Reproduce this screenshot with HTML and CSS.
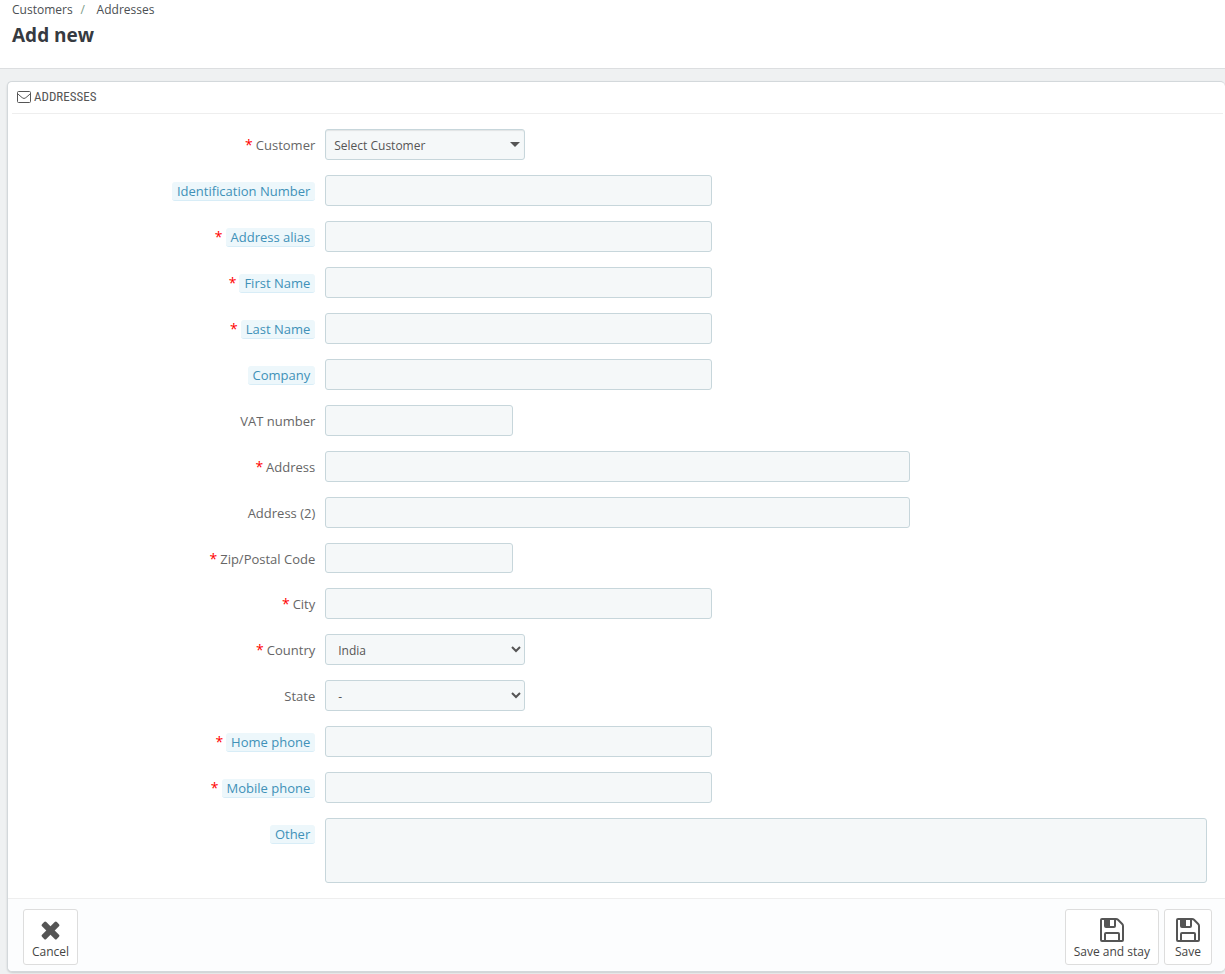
FILE: index.html
```html
<!DOCTYPE html>
<html lang="en">
<head>
<meta charset="utf-8">
<meta name="viewport" content="width=device-width, initial-scale=1">
<title>Add new - Addresses</title>
<link rel="stylesheet" href="styles.css">
</head>
<body>
<header class="page-head">
  <nav class="breadcrumb" aria-label="Breadcrumb">
    <a href="#customers">Customers</a><span class="separator">/</span><a href="#addresses">Addresses</a>
  </nav>
  <h1 class="page-title">Add new</h1>
</header>
<main class="content">
  <form class="panel">
    <h2 class="panel-heading">
      <svg class="icon-envelope" viewBox="0 0 14 12" aria-hidden="true"><path d="M1.5.5h11q1 0 1 1v9q0 1-1 1h-11q-1 0-1-1v-9q0-1 1-1zM.5 2.5Q1 3.2 5.2 6.7q1.8 1.6 3.6 0Q13 3.2 13.5 2.500" fill="none" stroke="currentColor"/></svg>
      <span>ADDRESSES</span>
    </h2>
    <div class="fields">
      <div class="row"><label class="label required" for="customer"><span>Customer</span></label>
        <div class="chosen"><select class="control" id="customer"><option>Select Customer</option></select></div></div>
      <div class="row"><label class="label" for="dni"><span class="hint">Identification Number</span></label><input class="control span-4" id="dni" type="text"></div>
      <div class="row"><label class="label required" for="alias"><span class="hint">Address alias</span></label><input class="control span-4" id="alias" type="text"></div>
      <div class="row"><label class="label required" for="first"><span class="hint">First Name</span></label><input class="control span-4" id="first" type="text"></div>
      <div class="row"><label class="label required" for="last"><span class="hint">Last Name</span></label><input class="control span-4" id="last" type="text"></div>
      <div class="row"><label class="label" for="company"><span class="hint">Company</span></label><input class="control span-4" id="company" type="text"></div>
      <div class="row"><label class="label" for="vat"><span>VAT number</span></label><input class="control span-2" id="vat" type="text"></div>
      <div class="row"><label class="label required" for="address1"><span>Address</span></label><input class="control span-6" id="address1" type="text"></div>
      <div class="row"><label class="label" for="address2"><span>Address (2)</span></label><input class="control span-6" id="address2" type="text"></div>
      <div class="row row-compact"><label class="label required" for="zip"><span>Zip/Postal Code</span></label><input class="control span-2" id="zip" type="text"></div>
      <div class="row"><label class="label required" for="city"><span>City</span></label><input class="control span-4" id="city" type="text"></div>
      <div class="row"><label class="label required" for="country"><span>Country</span></label><select class="control select" id="country"><option>India</option></select></div>
      <div class="row"><label class="label" for="state"><span>State</span></label><select class="control select" id="state"><option>-</option></select></div>
      <div class="row"><label class="label required" for="phone"><span class="hint">Home phone</span></label><input class="control span-4" id="phone" type="text"></div>
      <div class="row"><label class="label required" for="mobile"><span class="hint">Mobile phone</span></label><input class="control span-4" id="mobile" type="text"></div>
      <div class="row"><label class="label" for="other"><span class="hint">Other</span></label><textarea class="control textarea" id="other"></textarea></div>
    </div>
    <footer class="panel-footer">
      <button class="button" type="button">
        <svg class="button-icon" viewBox="0 0 24 24" aria-hidden="true"><g fill="currentColor"><rect x="1" y="9.500" width="21" height="6" rx="1.500" transform="rotate(45 11.500 12.500)"/><rect x="1" y="9.500" width="21" height="6" rx="1.500" transform="rotate(-45 11.500 12.500)"/></g></svg>
        <span>Cancel</span>
      </button>
      <div class="button-group">
        <button class="button" type="button">
          <svg class="button-icon" viewBox="0 0 24 24" aria-hidden="true"><use href="#disk"/></svg>
          <span>Save and stay</span>
        </button>
        <button class="button" type="submit">
          <svg class="button-icon" viewBox="0 0 24 24" aria-hidden="true"><g id="disk" fill="none" stroke="currentColor" stroke-width="2"><path d="M2 1h14q1.200 0 2 .8L22.200 6q.8.800.8 2v14q0 1-1 1H2q-1 0-1-1V2q0-1 1-1z"/><path d="M5 23v-7q0-1 1-1h12q1 0 1 1v7M5 1v7q0 1 1 1h8q1 0 1-1V1"/><path d="M5 1h5v8H5z" fill="currentColor" stroke="none"/></g></svg>
          <span>Save</span>
        </button>
      </div>
    </footer>
  </form>
</main>
</body>
</html>
```
FILE: styles.css
```css
* { box-sizing: border-box; }
body {
  margin: 0;
  min-height: 100vh;
  background: #eff1f2;
  color: #555;
  font: 12px/17px "Open Sans", "Noto Sans", sans-serif;
}
.page-head {
  padding: 1px 12px 20px;
  background: #fff;
  border-bottom: 1px solid #dcdee0;
}
.breadcrumb { display: flex; gap: 8px; }
.breadcrumb a { color: #4b4f53; text-decoration: none; }
.separator { width: 8px; color: #7a9a88; }
.page-title {
  margin: 4px 0 0;
  color: #363a41;
  font-size: 19px;
  font-weight: 700;
  line-height: 26px;
}
.content { padding: 12px 0 2px 7px; }
.panel {
  background: #fff;
  border: 1px solid #d3d8db;
  border-right: 0;
  border-radius: 5px;
  box-shadow: 0 1px 2px rgba(0, 0, 0, .15);
}
.panel-heading {
  display: flex;
  align-items: center;
  gap: 3px;
  height: 32px;
  margin: 0 2px 0 4px;
  padding: 0 0 1px 5px;
  border-bottom: 1px solid #eee;
  font: 400 13px/16px "Roboto Condensed", "Liberation Sans Narrow", sans-serif;
}
.icon-envelope { width: 14px; height: 12px; }
.fields {
  display: grid;
  gap: 15px;
  padding: 15px 18px 15px 20px;
}
.row {
  display: grid;
  grid-template-columns: repeat(12, minmax(0, 1fr));
  column-gap: 10px;
  align-items: start;
}
.label {
  grid-column: span 3;
  padding-top: 7px;
  color: #666;
  font-size: 13px;
  line-height: 18px;
  text-align: right;
}
.required::before {
  content: "*";
  margin-right: 3px;
  color: #f00;
  font-size: 14px;
  line-height: 12px;
}
.hint {
  display: inline-block;
  padding: 0 5px;
  border-bottom: 1px solid #d8edf7;
  border-radius: 3px;
  background: #edf7fb;
  color: #4091b8;
}
.control {
  width: 100%;
  height: 31px;
  margin: 0;
  padding: 6px 8px;
  border: 1px solid #c7d6db;
  border-radius: 3px;
  background-color: #f5f8f9;
  color: #555;
  font: inherit;
}
.row-compact .control { height: 30px; }
.span-2 { grid-column: span 2; }
.span-4 { grid-column: span 4; }
.span-6 { grid-column: span 6; }
.chosen, .select { grid-column: span 4; width: 200px; }
.chosen { position: relative; }
.chosen .control { display: block; padding: 7px 8px 5px; appearance: none; box-shadow: inset 0 1px 1px rgba(0, 0, 0, .08); }
.chosen::after {
  content: "";
  position: absolute;
  top: 13px;
  right: 5px;
  border: 5px solid transparent;
  border-top-color: #555;
  border-bottom: 0;
  pointer-events: none;
}
.textarea {
  display: block;
  grid-column: span 9;
  height: 65px;
  resize: none;
}
.panel-footer {
  display: flex;
  justify-content: space-between;
  padding: 10px 13px 6px 15px;
  border-top: 1px solid #eee;
  border-radius: 0 0 5px 5px;
  background: #fcfdfe;
}
.button-group { display: flex; gap: 5px; }
.button {
  display: flex;
  flex-direction: column;
  align-items: center;
  min-width: 48px;
  height: 56px;
  padding: 8px 8px 4px;
  border: 1px solid #ddd;
  border-radius: 3px;
  background: #fff;
  color: #555;
  font: inherit;
}
.button span { color: #444; }
.button-icon { width: 24px; height: 24px; margin-bottom: 1px; }
```
